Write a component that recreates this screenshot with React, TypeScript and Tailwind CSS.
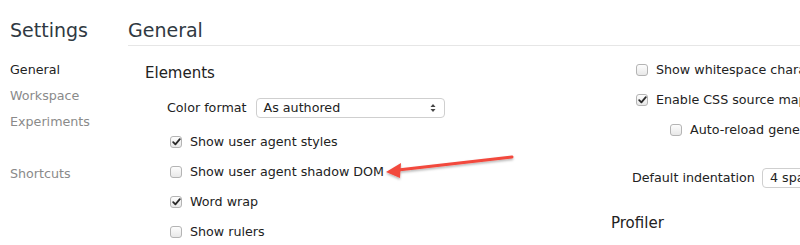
import { ReactNode } from "react";

function Checkbox({ checked }: { checked?: boolean }) {
  return (
    <span className="relative inline-flex h-[12px] w-[12px] shrink-0 items-center justify-center rounded-[3px] border border-[#b4b4b4] bg-gradient-to-b from-[#fdfdfd] to-[#e8e8e8]">
      {checked && (
        <svg width="9" height="8" viewBox="0 0 9 8" className="block">
          <path
            d="M1.2 4.2 L3.4 6.4 L7.8 1.2"
            fill="none"
            stroke="#2a2a2a"
            strokeWidth="1.8"
            strokeLinecap="round"
            strokeLinejoin="round"
          />
        </svg>
      )}
    </span>
  );
}

function CheckRow({ checked, children, indent = "" }: { checked?: boolean; children: ReactNode; indent?: string }) {
  return (
    <div className={`flex h-[30px] items-center gap-[8px] whitespace-nowrap ${indent}`}>
      <Checkbox checked={checked} />
      <span>{children}</span>
    </div>
  );
}

function SelectBox({ value, width }: { value: string; width: string }) {
  return (
    <div
      className={`flex h-[20px] ${width} shrink-0 items-center justify-between rounded-[4px] border border-[#cfcfcf] bg-white pl-[7px] pr-[8px]`}
    >
      <span className="whitespace-nowrap">{value}</span>
      <svg width="6" height="10" viewBox="0 0 6 10">
        <path d="M0.5 4 L3 1 L5.5 4 Z" fill="#444" />
        <path d="M0.5 6 L3 9 L5.5 6 Z" fill="#444" />
      </svg>
    </div>
  );
}

export default function App() {
  return (
    <div className="relative flex h-[245px] w-[800px] overflow-hidden bg-white font-['DejaVu_Sans',sans-serif] text-[12.7px] text-[#222]">
      {/* Barra lateral */}
      <aside className="w-[128px] shrink-0 pl-[10px]">
        <div className="h-[46px] pt-[19px]">
          <h1 className="text-[19px] leading-[22px] text-[#303942]">Settings</h1>
        </div>
        <nav className="mt-[11px] flex flex-col">
          <span className="flex h-[26px] items-center text-[#222]">General</span>
          <span className="flex h-[26px] items-center text-[#8a8a8a]">Workspace</span>
          <span className="flex h-[26px] items-center text-[#8a8a8a]">Experiments</span>
          <span className="h-[26px]" />
          <span className="flex h-[26px] items-center text-[#8a8a8a]">Shortcuts</span>
        </nav>
      </aside>

      {/* Conteúdo */}
      <main className="min-w-0 flex-1">
        <header className="h-[46px] border-b border-[#e6e6e6] pt-[19px]">
          <h1 className="text-[19px] leading-[22px] text-[#303942]">General</h1>
        </header>

        <div className="flex">
          <section className="w-[483px] shrink-0 pl-[17px]">
            <h2 className="mt-[17px] flex h-[20px] items-center text-[15px] text-[#222]">Elements</h2>
            <div className="mt-[15px] flex h-[20px] items-center gap-[9px] pl-[22px]">
              <span className="whitespace-nowrap">Color format</span>
              <SelectBox value="As authored" width="w-[189px]" />
            </div>
            <div className="mt-[9px] pl-[25px]">
              <CheckRow checked>Show user agent styles</CheckRow>
              <CheckRow>Show user agent shadow DOM</CheckRow>
              <CheckRow checked>Word wrap</CheckRow>
              <CheckRow>Show rulers</CheckRow>
            </div>
          </section>

          <section className="min-w-0 flex-1 overflow-hidden pt-[9px]">
            <CheckRow indent="pl-[25px]">Show whitespace characters</CheckRow>
            <CheckRow checked indent="pl-[25px]">
              Enable CSS source maps
            </CheckRow>
            <CheckRow indent="pl-[59px]">Auto-reload generated CSS</CheckRow>
            <div className="mt-[23px] flex h-[20px] items-center gap-[7px] whitespace-nowrap pl-[21px]">
              <span>Default indentation</span>
              <SelectBox value="4 spaces" width="w-[120px]" />
            </div>
            <h2 className="mt-[25px] flex h-[20px] items-center text-[15px] text-[#222]">Profiler</h2>
          </section>
        </div>
      </main>

      {/* Seta de anotação */}
      <svg
        className="pointer-events-none absolute left-0 top-0"
        width="800"
        height="245"
        viewBox="0 0 800 245"
      >
        <defs>
          <filter id="sh" x="-10%" y="-50%" width="120%" height="200%">
            <feDropShadow dx="0" dy="1.5" stdDeviation="1.2" floodColor="#000" floodOpacity="0.3" />
          </filter>
        </defs>
        <g filter="url(#sh)">
          <line x1="512" y1="157" x2="398" y2="170" stroke="#f2483d" strokeWidth="3" strokeLinecap="round" />
          <path d="M386 172 L401 163 L400 178 Z" fill="#f2483d" />
        </g>
      </svg>
    </div>
  );
}
